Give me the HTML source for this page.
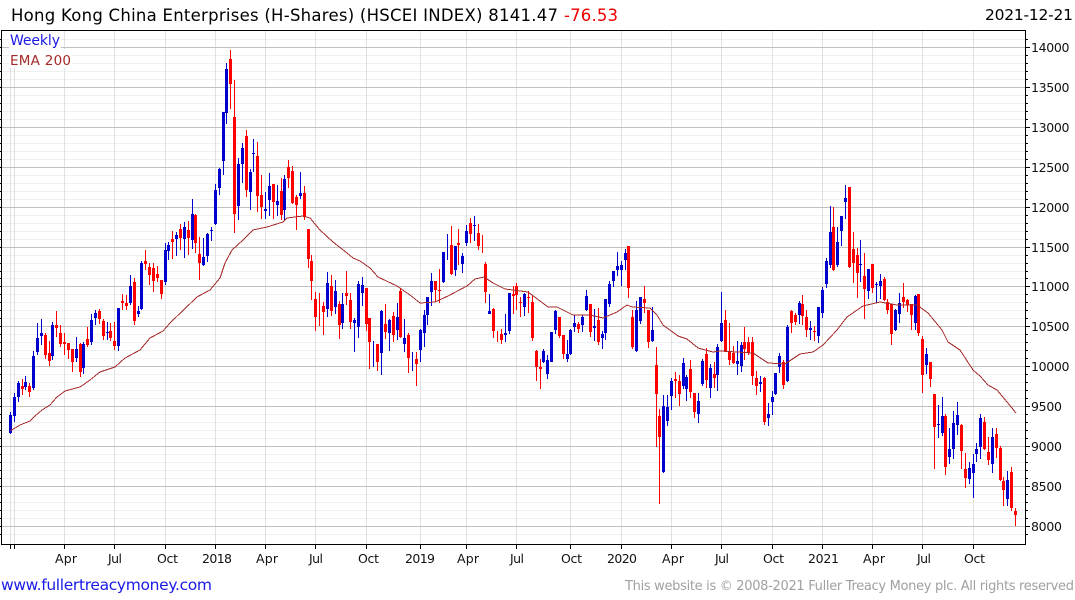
<!DOCTYPE html>
<html><head><meta charset="utf-8"><title>HSCEI INDEX</title>
<style>html,body{margin:0;padding:0;background:#fff}svg{display:block}text{font-family:"DejaVu Sans","Liberation Sans",sans-serif}</style>
</head><body>
<svg width="1075" height="600" viewBox="0 0 1075 600" xmlns="http://www.w3.org/2000/svg">
<rect width="1075" height="600" fill="#fff"/>
<g shape-rendering="crispEdges" fill="none">
<path stroke="#f0f0f0" d="M2 39.5H1025M2 55.5H1025M2 63.5H1025M2 71.5H1025M2 79.5H1025M2 95.5H1025M2 103.5H1025M2 111.5H1025M2 119.5H1025M2 135.5H1025M2 143.5H1025M2 151.5H1025M2 159.5H1025M2 175.5H1025M2 183.5H1025M2 191.5H1025M2 199.5H1025M2 215.5H1025M2 223.5H1025M2 231.5H1025M2 239.5H1025M2 255.5H1025M2 263.5H1025M2 271.5H1025M2 278.5H1025M2 294.5H1025M2 302.5H1025M2 310.5H1025M2 318.5H1025M2 334.5H1025M2 342.5H1025M2 350.5H1025M2 358.5H1025M2 374.5H1025M2 382.5H1025M2 390.5H1025M2 398.5H1025M2 414.5H1025M2 422.5H1025M2 430.5H1025M2 438.5H1025M2 454.5H1025M2 462.5H1025M2 470.5H1025M2 478.5H1025M2 494.5H1025M2 502.5H1025M2 510.5H1025M2 518.5H1025M2 534.5H1025"/>
<path stroke="#e0e0e0" d="M10.5 31V544M14.5 31V544M64.5 31V544M114.5 31V544M165.5 31V544M215.5 31V544M265.5 31V544M315.5 31V544M366.5 31V544M420.5 31V544M466.5 31V544M516.5 31V544M570.5 31V544M621.5 31V544M671.5 31V544M721.5 31V544M772.5 31V544M822.5 31V544M872.5 31V544M922.5 31V544M973.5 31V544"/>
<path stroke="#c0c0c0" d="M2 47.5H1025M2 87.5H1025M2 127.5H1025M2 167.5H1025M2 207.5H1025M2 247.5H1025M2 286.5H1025M2 326.5H1025M2 366.5H1025M2 406.5H1025M2 446.5H1025M2 486.5H1025M2 526.5H1025"/>
<rect x="9" y="31" width="52" height="18" fill="#fff"/>
<rect x="9" y="49" width="63" height="19" fill="#fff"/>
<path stroke="#000" d="M1.5 30V544.5M1 30.5H1026M1 544.5H1026M1025.5 30V545"/>
<path stroke="#000" d="M0 39.5H2M0 47.5H2M0 55.5H2M0 63.5H2M0 71.5H2M0 79.5H2M0 87.5H2M0 95.5H2M0 103.5H2M0 111.5H2M0 119.5H2M0 127.5H2M0 135.5H2M0 143.5H2M0 151.5H2M0 159.5H2M0 167.5H2M0 175.5H2M0 183.5H2M0 191.5H2M0 199.5H2M0 207.5H2M0 215.5H2M0 223.5H2M0 231.5H2M0 239.5H2M0 247.5H2M0 255.5H2M0 263.5H2M0 271.5H2M0 278.5H2M0 286.5H2M0 294.5H2M0 302.5H2M0 310.5H2M0 318.5H2M0 326.5H2M0 334.5H2M0 342.5H2M0 350.5H2M0 358.5H2M0 366.5H2M0 374.5H2M0 382.5H2M0 390.5H2M0 398.5H2M0 406.5H2M0 414.5H2M0 422.5H2M0 430.5H2M0 438.5H2M0 446.5H2M0 454.5H2M0 462.5H2M0 470.5H2M0 478.5H2M0 486.5H2M0 494.5H2M0 502.5H2M0 510.5H2M0 518.5H2M0 526.5H2M0 534.5H2"/>
<path stroke="#000" d="M1026 39.5H1028M1026 55.5H1028M1026 63.5H1028M1026 71.5H1028M1026 79.5H1028M1026 95.5H1028M1026 103.5H1028M1026 111.5H1028M1026 119.5H1028M1026 135.5H1028M1026 143.5H1028M1026 151.5H1028M1026 159.5H1028M1026 175.5H1028M1026 183.5H1028M1026 191.5H1028M1026 199.5H1028M1026 215.5H1028M1026 223.5H1028M1026 231.5H1028M1026 239.5H1028M1026 255.5H1028M1026 263.5H1028M1026 271.5H1028M1026 278.5H1028M1026 294.5H1028M1026 302.5H1028M1026 310.5H1028M1026 318.5H1028M1026 334.5H1028M1026 342.5H1028M1026 350.5H1028M1026 358.5H1028M1026 374.5H1028M1026 382.5H1028M1026 390.5H1028M1026 398.5H1028M1026 414.5H1028M1026 422.5H1028M1026 430.5H1028M1026 438.5H1028M1026 454.5H1028M1026 462.5H1028M1026 470.5H1028M1026 478.5H1028M1026 494.5H1028M1026 502.5H1028M1026 510.5H1028M1026 518.5H1028M1026 534.5H1028M1026 47.5H1030M1026 87.5H1030M1026 127.5H1030M1026 167.5H1030M1026 207.5H1030M1026 247.5H1030M1026 286.5H1030M1026 326.5H1030M1026 366.5H1030M1026 406.5H1030M1026 446.5H1030M1026 486.5H1030M1026 526.5H1030"/>
<path stroke="#000" d="M10.5 545V549M14.5 545V549M64.5 545V549M114.5 545V549M165.5 545V549M215.5 545V549M265.5 545V549M315.5 545V549M366.5 545V549M420.5 545V549M466.5 545V549M516.5 545V549M570.5 545V549M621.5 545V549M671.5 545V549M721.5 545V549M772.5 545V549M822.5 545V549M872.5 545V549M922.5 545V549M973.5 545V549"/>

<!-- blue wicks -->
<path stroke="#0000cd" stroke-width="1" d="M10.5 412V434M14.5 393V422M18.5 381V402M25.5 376V390M33.5 351V390M37.5 323V355M41.5 319V345M52.5 322V360M76.5 337V362M83.5 342V374M91.5 314V345M95.5 310V325M107.5 322V340M118.5 308V351M130.5 275V305M138.5 306V317M141.5 261V310M165.5 243V285M168.5 242V260M176.5 232V256M184.5 222V258M192.5 199V249M203.5 238V266M207.5 233V262M211.5 227V241M215.5 184V225M219.5 168V195M223.5 112V175M226.5 63V124M238.5 158V220M242.5 143V183M250.5 169V210M253.5 139V172M265.5 192V219M269.5 173V216M277.5 185V216M284.5 175V220M300.5 172V199M327.5 272V317M335.5 280V314M342.5 293V329M354.5 318V352M358.5 281V338M362.5 277V306M373.5 341V367M381.5 310V375M389.5 319V351M397.5 303V340M404.5 319V352M412.5 352V371M420.5 329V362M424.5 310V347M427.5 297V325M431.5 273V306M443.5 252V283M447.5 234V260M455.5 246V276M462.5 253V273M466.5 225V246M474.5 216V241M489.5 294V314M505.5 314V342M509.5 293V334M524.5 293V316M543.5 349V363M547.5 355V379M551.5 332V362M555.5 310V334M567.5 340V362M570.5 329V355M574.5 315V332M582.5 315V332M586.5 290V311M594.5 309V341M602.5 331V349M605.5 299V340M609.5 281V307M613.5 271V287M617.5 252V276M621.5 261V286M625.5 249V270M636.5 301V352M640.5 297V324M652.5 307V342M663.5 395V473M667.5 395V426M671.5 378V410M683.5 358V389M686.5 375V401M698.5 393V423M702.5 359V386M710.5 364V398M717.5 344V391M721.5 292V342M737.5 341V375M741.5 342V372M760.5 376V392M768.5 403V426M772.5 391V415M775.5 373V395M779.5 353V373M787.5 325V382M799.5 301V324M810.5 321V340M818.5 307V343M822.5 287V318M826.5 258V288M830.5 206V268M837.5 227V267M841.5 216V246M845.5 185V219M860.5 240V282M868.5 269V299M876.5 282V303M880.5 274V299M895.5 309V331M899.5 293V323M915.5 295V330M926.5 348V374M938.5 405V438M942.5 397V436M949.5 428V464M953.5 411V459M957.5 402V435M969.5 462V484M973.5 454V498M976.5 443V462M980.5 414V459M992.5 428V473M1007.5 471V506"/>
<!-- blue bodies -->
<path stroke="#0000cd" stroke-width="3" d="M10.5 415V433M14.5 397V416M18.5 383V397M25.5 382V387M33.5 356V388M37.5 338V352M41.5 333V336M52.5 325V356M76.5 349V358M83.5 344V368M91.5 320V342M95.5 313V318M107.5 332V333M118.5 308V346M130.5 286V303M138.5 311V314M141.5 263V309M165.5 250V282M168.5 245V251M176.5 235V239M184.5 227V239M192.5 214V240M203.5 257V265M207.5 234V256M211.5 230V231M215.5 190V224M219.5 169V188M223.5 112V161M226.5 69V113M238.5 164V206M242.5 148V164M250.5 172V192M253.5 153V154M265.5 209V211M269.5 186V200M277.5 201V205M284.5 179V210M300.5 193V196M327.5 283V309M335.5 291V307M342.5 304V323M354.5 320V323M358.5 284V327M362.5 285V293M381.5 311V353M389.5 320V333M397.5 317V330M404.5 338V344M420.5 330V350M424.5 315V333M427.5 297V315M431.5 281V292M443.5 252V282M455.5 246V270M462.5 256V264M466.5 231V243M474.5 225V226M489.5 311V314M505.5 333V335M509.5 293V331M524.5 294V307M543.5 351V362M547.5 360V374M551.5 332V362M555.5 311V330M567.5 354V359M570.5 330V354M574.5 323V327M582.5 317V325M586.5 296V310M594.5 326V328M602.5 334V338M605.5 299V333M609.5 284V304M613.5 271V281M617.5 266V270M621.5 265V270M625.5 253V260M636.5 310V351M640.5 297V321M652.5 330V341M663.5 406V472M667.5 407V421M671.5 381V396M683.5 363V386M686.5 377V389M698.5 401V414M702.5 361V384M710.5 368V388M717.5 347V375M721.5 323V341M737.5 361V364M741.5 345V366M760.5 382V384M768.5 414V418M772.5 397V402M775.5 373V394M779.5 356V367M787.5 327V381M799.5 303V315M810.5 328V330M818.5 307V336M822.5 290V313M826.5 261V284M830.5 232V265M837.5 242V265M841.5 216V231M845.5 198V202M860.5 264V265M868.5 269V291M876.5 284V285M880.5 281V286M895.5 310V330M899.5 303V314M915.5 296V323M926.5 354V365M938.5 424V425M942.5 416V433M949.5 449V457M953.5 423V449M957.5 415V425M969.5 468V479M973.5 464V473M976.5 449V454M980.5 418V447M992.5 437V464M1007.5 480V499"/>
<!-- red wicks -->
<path stroke="#f00" stroke-width="1" d="M22.5 379V395M29.5 383V397M45.5 333V359M49.5 341V366M56.5 311V337M60.5 325V347M64.5 333V355M68.5 343V359M72.5 349V372M80.5 343V377M87.5 327V347M99.5 309V324M103.5 319V340M110.5 323V341M114.5 322V350M122.5 294V310M126.5 295V310M134.5 278V325M145.5 250V270M149.5 263V285M153.5 263V292M157.5 266V282M161.5 280V299M172.5 231V259M180.5 224V250M188.5 221V255M195.5 214V253M199.5 237V280M230.5 50V109M234.5 80V233M246.5 130V197M257.5 142V212M261.5 175V219M273.5 184V219M281.5 178V220M288.5 160V188M292.5 166V204M296.5 195V230M304.5 186V220M308.5 229V268M311.5 255V300M315.5 292V331M319.5 293V326M323.5 302V335M331.5 275V316M339.5 301V339M346.5 271V305M350.5 293V329M366.5 288V331M369.5 318V369M377.5 344V371M385.5 304V339M393.5 312V342M400.5 289V338M408.5 333V373M416.5 352V386M435.5 281V302M439.5 269V303M451.5 226V275M458.5 229V265M470.5 218V243M478.5 224V250M482.5 235V253M485.5 262V303M493.5 308V338M497.5 331V342M501.5 329V344M513.5 286V314M516.5 283V310M520.5 297V317M528.5 291V313M532.5 296V341M536.5 350V381M540.5 359V389M559.5 317V338M563.5 335V359M578.5 322V333M590.5 304V337M598.5 308V345M628.5 246V298M632.5 310V349M644.5 286V313M648.5 310V348M656.5 347V447M659.5 409V504M675.5 372V398M679.5 375V406M690.5 360V398M694.5 393V418M706.5 348V388M714.5 362V388M725.5 310V352M729.5 323V365M733.5 346V364M744.5 327V360M748.5 337V355M752.5 337V385M756.5 371V395M764.5 377V425M783.5 360V389M791.5 310V333M795.5 313V325M802.5 295V325M806.5 310V337M814.5 326V341M833.5 207V271M849.5 187V268M853.5 232V283M857.5 248V298M864.5 253V319M872.5 264V293M884.5 277V301M887.5 299V314M891.5 304V345M903.5 283V308M907.5 299V312M911.5 304V330M918.5 294V336M922.5 336V393M930.5 362V387M934.5 394V469M945.5 414V475M961.5 424V469M965.5 453V488M984.5 417V450M988.5 437V465M996.5 428V458M1000.5 446V481M1003.5 477V506M1011.5 467V511M1015.5 508V526"/>
<!-- red bodies -->
<path stroke="#f00" stroke-width="3" d="M22.5 386V389M29.5 386V392M45.5 335V355M49.5 353V361M56.5 325V328M60.5 333V344M64.5 342V344M68.5 343V350M72.5 349V362M80.5 344V372M87.5 339V345M99.5 311V319M103.5 321V336M110.5 331V338M114.5 341V346M122.5 301V303M126.5 303V306M134.5 282V321M145.5 261V264M149.5 267V275M153.5 268V281M157.5 274V278M161.5 280V294M172.5 239V242M180.5 229V238M188.5 230V238M195.5 215V243M199.5 254V263M230.5 59V84M234.5 117V214M246.5 136V190M257.5 156V196M261.5 195V207M273.5 184V202M281.5 191V215M288.5 167V178M292.5 171V203M296.5 197V205M304.5 193V217M308.5 229V259M311.5 261V281M315.5 299V317M323.5 306V312M331.5 286V311M339.5 304V325M346.5 293V296M350.5 300V322M366.5 288V324M369.5 318V342M377.5 344V362M385.5 324V332M393.5 316V335M400.5 291V337M408.5 335V358M416.5 359V364M435.5 281V290M439.5 290V291M451.5 245V274M458.5 243V245M470.5 223V234M478.5 233V246M485.5 264V292M493.5 309V331M501.5 334V340M513.5 294V296M516.5 286V295M520.5 302V303M528.5 297V298M532.5 302V338M536.5 351V367M540.5 367V369M559.5 317V336M563.5 335V354M578.5 324V329M590.5 304V332M598.5 320V342M628.5 246V288M632.5 317V347M644.5 299V303M648.5 310V342M656.5 365V394M659.5 416V437M675.5 379V381M679.5 381V394M690.5 369V392M694.5 393V412M706.5 354V380M714.5 374V378M725.5 320V351M729.5 351V360M733.5 353V363M744.5 342V349M748.5 342V353M752.5 342V376M756.5 378V386M764.5 378V422M783.5 362V385M791.5 311V323M795.5 315V322M802.5 304V316M806.5 317V330M814.5 331V332M833.5 227V270M849.5 187V267M853.5 249V263M857.5 255V273M864.5 276V289M872.5 264V288M884.5 279V300M887.5 302V310M891.5 304V334M903.5 297V302M907.5 300V305M911.5 304V315M918.5 294V333M922.5 339V375M930.5 362V379M934.5 394V427M945.5 416V467M961.5 425V451M965.5 469V478M984.5 422V449M988.5 452V460M996.5 434V448M1000.5 448V480M1003.5 481V490M1011.5 472V508M1015.5 511V515"/>
<!-- EMA -->
<path stroke="#a52a2a" stroke-width="1" d="M10 431L20 425L30 421L35 416L42 410L50 405L57 397L65 391L80 387L90 380L100 372L115 367L125 358L140 350L150 338L163 331L170 323L197 297L210 290L220 278L225 263L232 250L243 240L253 230L267 227L283 222L287 218L303 216L310 218L320 230L333 242L347 253L353 258L360 261L370 268L378 277L397 286L410 295L420 303L435 302L448 296L467 286L475 279L484 277L493 283L505 289L528 292L548 307L557 307L573 315L590 315L603 318L617 312L627 305L632 307L650 308L657 315L663 325L678 336L687 339L698 348L713 352L720 351L753 353L768 363L785 364L800 354L813 352L823 345L837 330L847 317L863 306L880 302L897 305L917 305L928 313L942 330L948 342L960 350L973 370L980 376L988 385L997 390L1007 402L1016 413"/>
</g>

<text x="11" y="21" font-size="16.5" fill="#000" textLength="547" lengthAdjust="spacing">Hong Kong China Enterprises (H-Shares) (HSCEI INDEX) 8141.47</text>
<text x="564" y="21" font-size="16.5" fill="#e00" textLength="54" lengthAdjust="spacing">-76.53</text>
<text x="985" y="20" font-size="15.5" fill="#000" textLength="88" lengthAdjust="spacing">2021-12-21</text>
<text x="10" y="45" font-size="14" fill="#1a1ae6" textLength="50" lengthAdjust="spacing">Weekly</text>
<text x="10" y="65" font-size="13.5" fill="#a52a2a" textLength="61" lengthAdjust="spacing">EMA 200</text>

<g font-size="12.5" fill="#111">
<text x="1031" y="52" textLength="38.5">14000</text>
<text x="1031" y="92" textLength="38.5">13500</text>
<text x="1031" y="132" textLength="38.5">13000</text>
<text x="1031" y="172" textLength="38.5">12500</text>
<text x="1031" y="212" textLength="38.5">12000</text>
<text x="1031" y="252" textLength="38.5">11500</text>
<text x="1031" y="291" textLength="38.5">11000</text>
<text x="1031" y="331" textLength="38.5">10500</text>
<text x="1031" y="371" textLength="38.5">10000</text>
<text x="1031" y="411" textLength="31">9500</text>
<text x="1031" y="451" textLength="31">9000</text>
<text x="1031" y="491" textLength="31">8500</text>
<text x="1031" y="531" textLength="31">8000</text>
</g>
<g font-size="12.5" fill="#111">
<text x="55" y="563" textLength="22">Apr</text>
<text x="108" y="563" textLength="14">Jul</text>
<text x="157" y="563" textLength="21">Oct</text>
<text x="202" y="563" textLength="30">2018</text>
<text x="256" y="563" textLength="22">Apr</text>
<text x="309" y="563" textLength="14">Jul</text>
<text x="358" y="563" textLength="21">Oct</text>
<text x="405" y="563" textLength="30">2019</text>
<text x="457" y="563" textLength="22">Apr</text>
<text x="510" y="563" textLength="14">Jul</text>
<text x="561" y="563" textLength="21">Oct</text>
<text x="607" y="563" textLength="30">2020</text>
<text x="662" y="563" textLength="22">Apr</text>
<text x="715" y="563" textLength="14">Jul</text>
<text x="763" y="563" textLength="21">Oct</text>
<text x="808" y="563" textLength="31">2021</text>
<text x="863" y="563" textLength="22">Apr</text>
<text x="917" y="563" textLength="14">Jul</text>
<text x="964" y="563" textLength="21">Oct</text>
</g>
<text x="1" y="590" font-size="15.5" fill="#1a1ae6" textLength="211" lengthAdjust="spacing">www.fullertreacymoney.com</text>
<text x="625" y="590" font-size="13" fill="#a0a0a0" textLength="449" lengthAdjust="spacing">This website is © 2008-2021 Fuller Treacy Money plc. All rights reserved</text>
</svg>
</body></html>
